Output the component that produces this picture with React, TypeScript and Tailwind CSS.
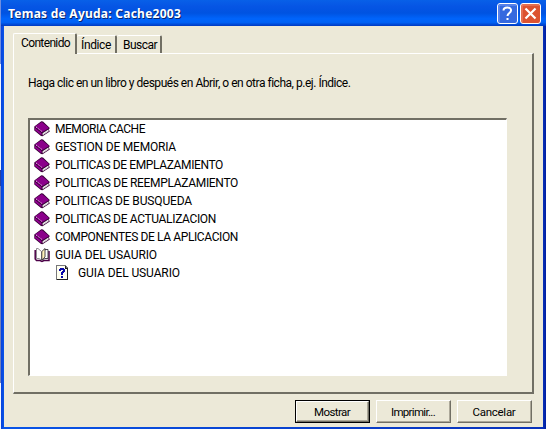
import { useLayoutEffect, useRef, useState } from "react";

type FitProps = { text: string; width: number; className?: string };

/* Single-line label whose letter spacing is tuned so it occupies a given width. */
function Label({ text, width, className = "" }: FitProps) {
  const ref = useRef<HTMLSpanElement>(null);
  const [spacing, setSpacing] = useState(0);
  useLayoutEffect(() => {
    if (ref.current) {
      const natural = ref.current.getBoundingClientRect().width - spacing * text.length;
      setSpacing((width - natural) / text.length);
    }
  }, [text, width]);
  return (
    <span ref={ref} className={`inline-block whitespace-pre ${className}`} style={{ letterSpacing: spacing }}>
      {text}
    </span>
  );
}

function Book() {
  return (
    <svg width="17" height="16" viewBox="0 0 17 16">
      <path d="M.3 5.500L7.300 .3L9 .5L15.800 7L14.800 8.500L15.800 10.500L8.500 15.300L7 15L.3 9.500Z" fill="#3a0038" />
      <path d="M1 5.600L7.800 .9L15 7L8 11.300Z" fill="#8b008b" />
      <path d="M.9 6.700L7.500 12V14.300L.9 9Z" fill="#920092" />
      <path d="M8.600 12.200L14.500 8.500V10.500L8.600 14.300Z" fill="#fff" />
      <path d="M9 13.400L14.500 9.800" stroke="#aaa" strokeWidth=".6" />
      <path d="M2 5.900L8 10.500" stroke="#f0b8f0" strokeWidth="1" strokeDasharray="1.200 1" />
    </svg>
  );
}

function OpenBook() {
  return (
    <svg width="17" height="16" viewBox="0 0 17 16">
      <path d="M1.200 3V12L2.500 13.500H6L8 14.500L10 13.500H15V4" fill="none" stroke="#4c0048" strokeWidth="1.500" />
      <path d="M2.500 1.500H4L7.500 4.500V13L5 11.500H2.500Z" fill="#fff" stroke="#77717a" strokeWidth=".8" />
      <path d="M11 2.500H14V11.500H11L8 13Z" fill="#fff" stroke="#39333c" strokeWidth=".9" />
      <path d="M7.800 4.500L11 1.500V10L7.800 13Z" fill="#fff3b8" stroke="#39333c" strokeWidth=".9" />
    </svg>
  );
}

function Topic() {
  return (
    <svg width="13" height="16" viewBox="0 0 13 16" shapeRendering="crispEdges">
      <path d="M0 0H9L12 3V15H0Z" fill="#77777a" />
      <path d="M1 1H9V4H11V14H1Z" fill="#fffff0" />
      <path d="M9 1H10V3H12V15H1V14H11V4H9Z" fill="#222" />
      <path d="M3 4H4V3H8V4H9V7H8V8H7V10H5V7H6V6H7V5H5V6H3Z M5 11H7V13H5Z" fill="#0808a8" />
    </svg>
  );
}

const books: [string, number][] = [
  ["MEMORIA CACHE", 90],
  ["GESTION DE MEMORIA", 121],
  ["POLITICAS DE EMPLAZAMIENTO", 168],
  ["POLITICAS DE REEMPLAZAMIENTO", 183],
  ["POLITICAS DE BUSQUEDA", 137],
  ["POLITICAS DE ACTUALIZACION", 161],
  ["COMPONENTES DE LA APLICACION", 183],
];

function Button({ text, width, primary }: { text: string; width: number; primary?: boolean }) {
  return (
    <button className={`h-[23px] w-[75px] bg-[#ece9d8] ${primary ? "border border-black" : ""}`}>
      <span className="flex h-full w-full items-center justify-center border border-t-white border-r-[#716f64] border-b-[#716f64] border-l-white pr-px text-[11.500px] shadow-[inset_-1px_-1px_#aca899]">
        <Label text={text} width={width} />
      </span>
    </button>
  );
}

export default function App() {
  return (
    <div className="flex h-[429px] w-[546px] overflow-hidden bg-[#ece9d8] font-['Roboto','Liberation_Sans',sans-serif] text-[12px] leading-[18px] text-black">
      <div className="flex w-px flex-col">
        <div className="h-[64px] bg-[#6f8ee0]" />
        <div className="h-[106px] bg-[#eef3ff]" />
        <div className="h-[16px] bg-[#28409c]" />
        <div className="h-[197px] bg-[#7281b8]" />
        <div className="grow bg-[#f4f7ff]" />
      </div>
      <main className="flex w-[545px] flex-col bg-[linear-gradient(90deg,#0842dc_0px,#0855e8_3px,#0831b9_542px,#001ea0_545px)]">
        <header className="flex h-[26px] shrink-0 items-center bg-[linear-gradient(180deg,#0860e8_0%,#0655e4_25%,#0053e1_50%,#0064fb_72%,#0062f5_86%,#0039c0_100%)] pr-[5px] pl-[7px] text-white">
          <Label
            text="Temas de Ayuda: Cache2003"
            width={173}
            className="pt-[2px] font-['Noto_Sans','Open_Sans',sans-serif] text-[12px] font-bold [text-shadow:1px_1px_#0a246a]"
          />
          <div className="ml-auto flex gap-[2px]">
            <svg width="21" height="21" viewBox="0 0 21 21">
              <rect x=".5" y=".5" width="20" height="20" rx="2.500" fill="#3569df" stroke="#fff" />
              <path d="M2 19V2H19" fill="none" stroke="#7899f3" />
              <path d="M6.500 7.500C6.500 3.500 14.500 3.500 14 7.500C14 10 10.500 10 10.500 13M10.500 15V17" fill="none" stroke="#fff" strokeWidth="2" />
            </svg>
            <svg width="21" height="21" viewBox="0 0 21 21">
              <rect x=".5" y=".5" width="20" height="20" rx="2.500" fill="#dc5230" stroke="#fff" />
              <path d="M2 19V2H19" fill="none" stroke="#ed8a70" />
              <path d="M5.500 5.500L15.500 15.500M15.500 5.500L5.500 15.500" stroke="#fff" strokeWidth="2.200" />
            </svg>
          </div>
        </header>
        <section className="mr-[3px] ml-[3px] flex h-[401px] flex-col bg-[#ece9d8] pt-[7px] pr-[9px] pl-[9px]">
          <nav className="flex h-[20px] items-end">
            <div className="relative -mb-px h-[21px] w-[64px] rounded-t-[2px] border-t border-r-2 border-l border-t-white border-r-[#716f64] border-l-white bg-[#ece9d8] pl-[7px]">
              <Label text="Contenido" width={49} />
            </div>
            <div className="h-[18px] w-[40px] rounded-t-[2px] border-t border-r-2 border-t-white border-r-[#716f64] pl-[4px]">
              <Label text="Índice" width={30} />
            </div>
            <div className="h-[18px] w-[45px] rounded-t-[2px] border-t border-r-2 border-t-white border-r-[#716f64] pl-[6px]">
              <Label text="Buscar" width={34} />
            </div>
          </nav>
          <div className="h-[341px] w-[521px] border-t border-r-2 border-b-2 border-l border-t-white border-r-[#716f64] border-b-[#716f64] border-l-white pt-[20px] pl-[14px]">
            <Label text="Haga clic en un libro y después en Abrir, o en otra ficha, p.ej. Índice." width={322} className="block w-max" />
            <div className="mt-[26px] h-[258px] w-[479px] border-t-2 border-r border-b border-l-2 border-t-[#716f64] border-r-white border-b-white border-l-[#716f64] bg-white pl-[4px]">
              {books.map(([title, width]) => (
                <div key={title} className="flex h-[18px] items-center gap-[4px]">
                  <Book />
                  <Label text={title} width={width} />
                </div>
              ))}
              <div className="flex h-[18px] items-center gap-[4px]">
                <OpenBook />
                <Label text="GUIA DEL USAURIO" width={102} />
              </div>
              <div className="flex h-[18px] items-center gap-[9px] pl-[22px]">
                <Topic />
                <Label text="GUIA DEL USUARIO" width={102} />
              </div>
            </div>
          </div>
          <footer className="mt-[6px] flex justify-end gap-[6px] pr-[2px]">
            <Button text="Mostrar" width={36} primary />
            <Button text="Imprimir..." width={44} />
            <Button text="Cancelar" width={43} />
          </footer>
        </section>
      </main>
    </div>
  );
}
